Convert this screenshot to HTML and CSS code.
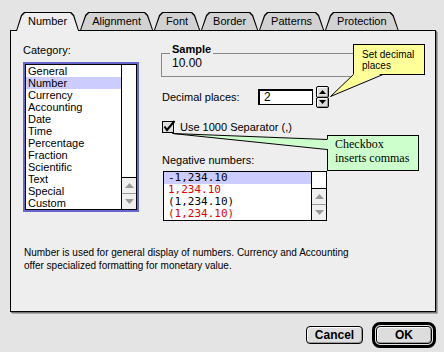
FILE: index.html
```html
<!DOCTYPE html>
<html lang="en">
<head>
    <meta charset="UTF-8">
    <title>Format Cells</title>
    <link rel="stylesheet" href="styles.css">
</head>
<body>
    <div class="dialog">
        <div class="tabs">
            <div class="tab active">Number</div>
            <div class="tab">Alignment</div>
            <div class="tab">Font</div>
            <div class="tab">Border</div>
            <div class="tab">Patterns</div>
            <div class="tab">Protection</div>
        </div>
        <div class="panel">
            <div class="panel-body">
                <div class="col-left">
                    <div class="label">Category:</div>
                    <div class="category-list">
                        <div class="list-inner">
                            <ul class="items">
                                <li>General</li>
                                <li class="selected">Number</li>
                                <li>Currency</li>
                                <li>Accounting</li>
                                <li>Date</li>
                                <li>Time</li>
                                <li>Percentage</li>
                                <li>Fraction</li>
                                <li>Scientific</li>
                                <li>Text</li>
                                <li>Special</li>
                                <li>Custom</li>
                            </ul>
                            <div class="scrollbar">
                                <div class="scroll-arrow"><svg width="9" height="5"><polygon points="0,5 9,5 4.5,0" fill="#999"/></svg></div>
                                <div class="scroll-arrow"><svg width="9" height="5"><polygon points="0,0 9,0 4.5,5" fill="#999"/></svg></div>
                            </div>
                        </div>
                    </div>
                </div>
                <div class="col-right">
                    <div class="sample">
                        <div class="sample-title">Sample</div>
                        <div class="sample-value">10.00</div>
                    </div>
                    <div class="decimal-row">
                        <span class="decimal-label">Decimal places:</span>
                        <div class="input">2</div>
                        <div class="spinner">
                            <div class="spin"><svg width="7" height="4"><polygon points="0,4 7,4 3.5,0" fill="#000"/></svg></div>
                            <div class="spin down"><svg width="7" height="4"><polygon points="0,0 7,0 3.5,4" fill="#000"/></svg></div>
                        </div>
                    </div>
                    <div class="check-row">
                        <svg class="checkbox" width="14" height="13">
                            <rect x="0.5" y="1.5" width="11" height="11" fill="#ddd" stroke="#000"/>
                            <path d="M2.5 6.5 L5 10 L12.5 1" fill="none" stroke="#000" stroke-width="2"/>
                        </svg>
                        <span>Use 1000 Separator (,)</span>
                    </div>
                    <div class="label neg-label">Negative numbers:</div>
                    <div class="neg-list">
                        <ul class="neg-items">
                            <li class="selected">-1,234.10</li>
                            <li class="red">1,234.10</li>
                            <li>(1,234.10)</li>
                            <li class="red">(1,234.10)</li>
                        </ul>
                        <div class="scrollbar small">
                            <div class="scroll-arrow"><svg width="9" height="5"><polygon points="0,5 9,5 4.5,0" fill="#999"/></svg></div>
                            <div class="scroll-arrow"><svg width="9" height="5"><polygon points="0,0 9,0 4.5,5" fill="#999"/></svg></div>
                        </div>
                    </div>
                </div>
            </div>
            <p class="description">Number is used for general display of numbers.  Currency and Accounting<br>offer specialized formatting for monetary value.</p>
        </div>
        <div class="buttons">
            <div class="btn cancel">Cancel</div>
            <div class="ok-ring"><div class="btn ok">OK</div></div>
        </div>
    </div>

    <div class="callout yellow">Set decimal<br>places</div>
    <div class="callout green">Checkbox<br>inserts commas</div>
    <svg class="pointers" width="444" height="352">
        <polygon points="354,73.5 382,73.5 331,96" fill="#ffff99"/>
        <polyline points="353.5,74.5 330.5,96.5 383,74.5" fill="none" stroke="#000"/>
        <polygon points="173,133.5 328,139.5 328,149" fill="#ccffcc"/>
        <polyline points="327,139.5 172.5,133.5 327,149.5" fill="none" stroke="#000"/>
    </svg>
</body>
</html>
```

FILE: styles.css
```css
body {
    margin: 0;
    width: 444px;
    height: 352px;
    overflow: hidden;
    position: relative;
    background: #e4e4e4;
    font-family: "Liberation Sans", Arial, sans-serif;
    font-size: 11px;
    color: #000;
}

.dialog {
    padding: 12px 0 0 10px;
}

/* tabs */
.tabs {
    display: flex;
    height: 18px;
    margin-left: 6px;
    gap: 1px;
}

.tab {
    position: relative;
    z-index: 0;
    height: 18px;
    line-height: 18px;
    padding: 0 12px;
}

.tab::before,
.tab::after {
    content: "";
    position: absolute;
    z-index: -1;
    clip-path: polygon(0 100%, 5px 3px, 8px 0, calc(100% - 8px) 0, calc(100% - 5px) 3px, 100% 100%);
}

.tab::before {
    inset: 0;
    background: #000;
}

.tab::after {
    top: 1px;
    left: 1px;
    right: 1px;
    bottom: 0;
    background: #d2d2d2;
}

.tab.active {
    z-index: 1;
    height: 19px;
}

.tab.active::after {
    background: #eee;
}

/* panel */
.panel {
    width: 424px;
    height: 280px;
    border: 1px solid #000;
    background: #eee;
    box-shadow: 1px 1px 0 #777, 2px 2px 0 #aaa;
}

.panel-body {
    display: flex;
    align-items: flex-start;
    padding: 13px 0 0 12px;
}

.col-left {
    width: 116px;
}

.label {
    height: 13px;
    line-height: 13px;
}

.category-list {
    margin-top: 5px;
    width: 116px;
    height: 150px;
    box-sizing: border-box;
    border: 2px solid #6666cc;
    display: flex;
}

.list-inner {
    flex: 1;
    display: flex;
    border: 1px solid #000;
    background: #fff;
}

.items,
.neg-items {
    flex: 1;
    margin: 0;
    padding: 0;
    list-style: none;
}

.items li {
    height: 12px;
    line-height: 12px;
    padding-left: 2px;
}

.items li.selected,
.neg-items li.selected {
    background: #ccccff;
}

.scrollbar {
    width: 14px;
    border-left: 1px solid #000;
    background: #fff;
    display: flex;
    flex-direction: column;
    justify-content: flex-end;
}

.scroll-arrow {
    height: 15px;
    border-top: 1px solid #999;
    background: #f0f0f0;
    display: flex;
    align-items: center;
    justify-content: center;
}

.scroll-arrow:first-child {
    border-top-color: #000;
}

.col-right {
    margin-left: 23px;
    padding-top: 9px;
}

.sample {
    width: 204px;
    height: 24px;
    box-sizing: border-box;
    margin-left: -1px;
    padding-left: 8px;
    border: 1px solid #888;
}

.sample-title {
    display: table;
    margin-top: -11px;
    padding: 0 2px;
    line-height: 13px;
    font-weight: bold;
    background: #eee;
}

.sample-value {
    padding-left: 2px;
    font-size: 12px;
    line-height: 14px;
}

.decimal-row {
    display: flex;
    align-items: center;
    height: 22px;
    margin-top: 9px;
}

.decimal-label {
    width: 96px;
}

.input {
    width: 55px;
    height: 16px;
    box-sizing: border-box;
    border: solid #000;
    border-width: 2px 1px 1px 2px;
    background: #fff;
    font-size: 12px;
    line-height: 13px;
    padding-left: 4px;
}

.spinner {
    margin-left: 3px;
    width: 13px;
    height: 22px;
    display: flex;
    flex-direction: column;
}

.spin {
    flex: 1;
    border: 1px solid #000;
    border-radius: 2px;
    background: #ddd;
    box-shadow: inset 1px 1px 0 #fff, inset -1px -1px 0 #999;
    display: flex;
    align-items: center;
    justify-content: center;
}

.spin.down {
    margin-top: -1px;
}

.check-row {
    display: flex;
    align-items: center;
    height: 13px;
    margin-top: 12px;
}

.checkbox {
    margin-right: 4px;
}

.neg-label {
    margin-top: 21px;
}

.neg-list {
    margin: 4px 0 0 1px;
    width: 164px;
    height: 50px;
    box-sizing: border-box;
    border: 1px solid #000;
    background: #fff;
    display: flex;
}

.neg-items li {
    height: 12px;
    line-height: 12px;
    padding-left: 4px;
    font-family: "DejaVu Sans Mono", monospace;
    font-size: 11px;
}

.neg-items li.red {
    color: #dd0000;
}

.description {
    margin: 25px 0 0 13px;
    font-size: 10px;
    line-height: 13px;
    white-space: nowrap;
}

/* buttons */
.buttons {
    width: 426px;
    margin-top: 10px;
    display: flex;
    justify-content: flex-end;
    align-items: center;
    gap: 9px;
}

.btn {
    height: 18px;
    box-sizing: border-box;
    border: 1px solid #000;
    border-radius: 4px;
    background: #ddd;
    box-shadow: inset 1px 1px 0 #fff, inset -1px -1px 0 #999;
    font-weight: bold;
    font-size: 12px;
    line-height: 16px;
    text-align: center;
}

.cancel {
    width: 57px;
}

.ok-ring {
    border: 3px solid #000;
    border-radius: 8px;
    padding: 1px;
}

.ok {
    width: 56px;
}

/* callouts */
.callout {
    position: absolute;
    box-sizing: border-box;
    border: 1px solid #000;
}

.yellow {
    left: 353px;
    top: 44px;
    width: 72px;
    height: 31px;
    padding: 4px 0 0 8px;
    background: #ffff99;
    font-size: 10px;
    line-height: 11px;
}

.green {
    left: 327px;
    top: 135px;
    width: 92px;
    height: 36px;
    padding: 1px 0 0 7px;
    background: #ccffcc;
    font-family: "Liberation Serif", "Times New Roman", serif;
    font-size: 12px;
    line-height: 14px;
}

.pointers {
    position: absolute;
    left: 0;
    top: 0;
    pointer-events: none;
}
```
